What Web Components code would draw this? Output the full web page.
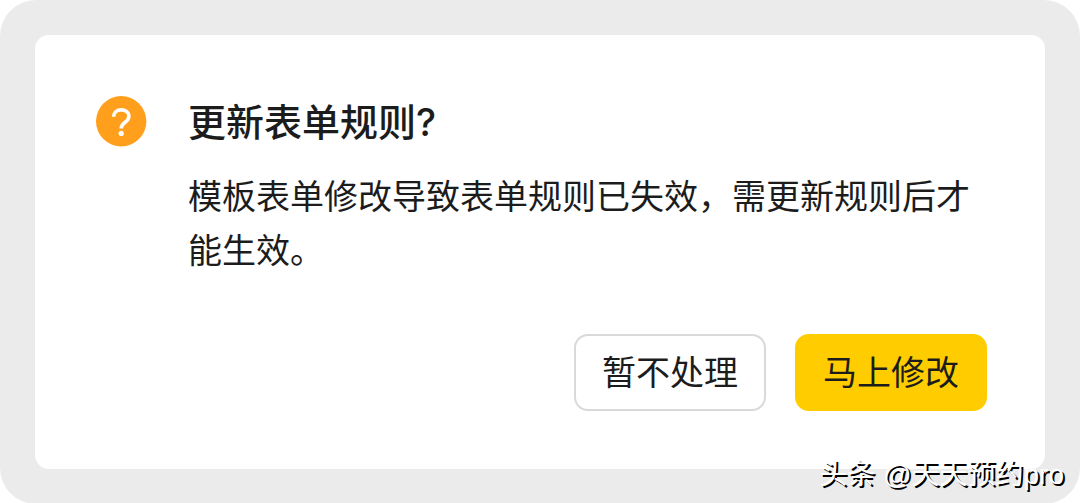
<!DOCTYPE html>
<html lang="zh-CN">
<head>
<meta charset="utf-8">
<meta name="viewport" content="width=device-width, initial-scale=1">
<title>更新表单规则</title>
<style>
  body { margin: 0; background: #fff; color: #1c1c1c; font-family: "Noto Sans CJK SC", sans-serif; }
</style>
</head>
<body>
<dialog-stage>
  <confirm-dialog>
    <question-icon slot="icon"></question-icon>
    <span slot="title">更新表单规则?</span>
    <span>模板表单修改导致表单规则已失效，需更新规则后才能生效。</span>
    <action-button slot="actions">暂不处理</action-button>
    <action-button slot="actions" primary>马上修改</action-button>
  </confirm-dialog>
  <source-mark slot="mark">头条 @天天预约pro</source-mark>
</dialog-stage>
<script>
  const define = (name, html) => customElements.define(name, class extends HTMLElement {
    constructor() {
      super();
      this.attachShadow({ mode: "open" }).innerHTML = html;
    }
  });

  define("dialog-stage", `
    <style>
      :host { display: block; position: relative; padding: 35px; border-radius: 36px; background: #ebebeb; }
    </style>
    <slot></slot><slot name="mark"></slot>`);

  define("confirm-dialog", `
    <style>
      :host { display: block; }
      section { display: grid; grid-template-columns: auto 1fr;
        column-gap: 41px; padding: 60px 58px 58px 61px;
        border-radius: 14px; background: #fff; }
      .icon { padding-top: 1px; }
      h1 { margin: 0; font-family: Inter, "Noto Sans CJK SC", sans-serif; font-size: 38px; line-height: 54px; font-weight: 500; }
      p { grid-column: 2; margin: 19px 0 0; font-size: 34px; line-height: 54px; }
      footer { grid-column: 1 / 3; display: flex; justify-content: flex-end; gap: 29px; margin-top: 58px; }
    </style>
    <section role="alertdialog" aria-labelledby="t" aria-describedby="d">
      <div class="icon"><slot name="icon"></slot></div>
      <h1 id="t"><slot name="title"></slot></h1>
      <p id="d"><slot></slot></p>
      <footer><slot name="actions"></slot></footer>
    </section>`);

  define("question-icon", `
    <style>
      :host { display: block; width: 51px; height: 51px; }
      svg { display: block; }
    </style>
    <svg width="51" height="51" viewBox="0 0 51 51" aria-hidden="true">
      <circle cx="25.2" cy="25.3" r="25.2" fill="#ff9f1c"/>
      <path d="M17.6 20.8C17.6 16.6 20.8 13.9 25.2 13.9C29.7 13.9 32.9 16.6 32.9 20.2C32.9 23 31.4 24.5 29.1 26.2C26.4 28.2 25.2 29.3 25.2 32.4" fill="none" stroke="#fff" stroke-width="3.6"/>
      <circle cx="25.2" cy="37.4" r="2.6" fill="#fff"/>
    </svg>`);

  define("action-button", `
    <style>
      :host { display: block; }
      button { display: block; box-sizing: border-box; height: 77px; padding: 0 26px 4px;
        border: 2px solid #d9d9d9; border-radius: 14px; background: #fff; color: inherit;
        font: inherit; font-size: 34px; line-height: 54px; cursor: pointer; }
      :host([primary]) button { background: #ffcc00; border-color: #ffcc00; }
    </style>
    <button type="button"><slot></slot></button>`);

  define("source-mark", `
    <style>
      :host { position: absolute; right: 16px; bottom: 9px; color: #fff;
        font-family: "Liberation Sans", "Noto Sans CJK SC", sans-serif; font-size: 28px;
        line-height: 40px; white-space: nowrap; text-shadow: 2px 2px 0 #000; }
    </style>
    <slot></slot>`);
</script>
</body>
</html>
